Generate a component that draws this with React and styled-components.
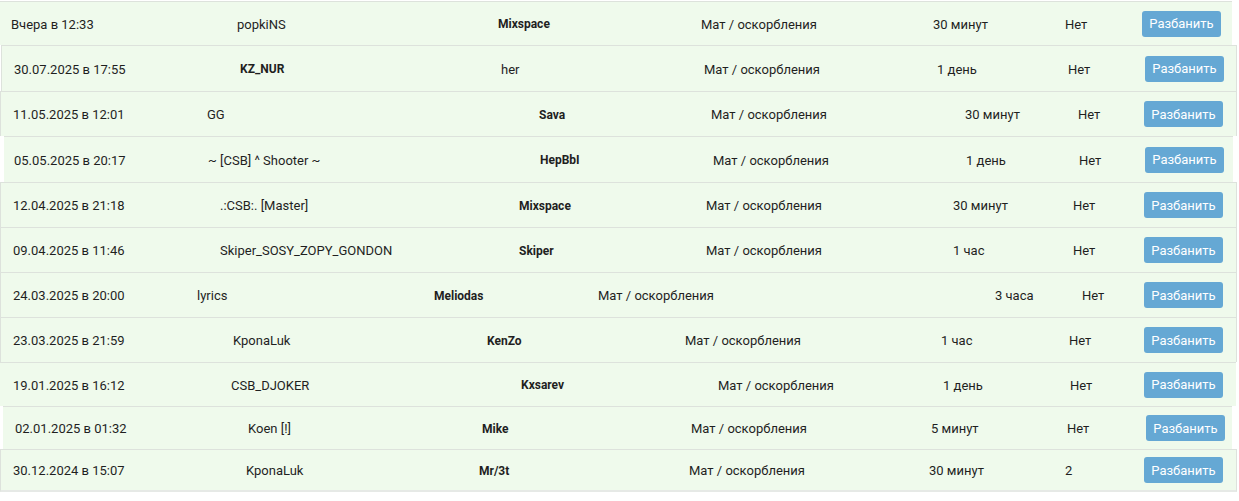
import React from "react";
import styled, { createGlobalStyle } from "styled-components";

const GlobalStyle = createGlobalStyle`
  body {
    margin: 0;
    background: #fff;
    font-family: Roboto, "Liberation Sans", Arial, sans-serif;
  }
`;

const List = styled.div`
  display: flex;
  flex-direction: column;
  padding-top: 1px;
  width: 1239px;
`;

const Row = styled.div`
  display: grid;
  grid-template-columns: ${({ $cols }) => $cols};
  align-items: center;
  height: ${({ $h }) => $h}px;
  box-sizing: border-box;
  margin-left: ${({ $x }) => $x}px;
  width: ${({ $w }) => $w}px;
  background: #effaec;
  border-top: 1px solid #dde2dc;
  border-left: ${({ $edge }) => ($edge ? "1px solid #dde2dc" : "none")};
  border-right: ${({ $edge }) => ($edge ? "1px solid #dde2dc" : "none")};
  &:last-child {
    border-bottom: 2px solid #e6e9e6;
  }
`;

const Cell = styled.div`
  font-size: ${({ $bold }) => ($bold ? 12 : 13)}px;
  color: #1f1f1f;
  white-space: nowrap;
  font-weight: ${({ $bold }) => ($bold ? 700 : 400)};
  padding-top: 1px;
`;

const UnbanButton = styled.button`
  font-family: Roboto, "Liberation Sans", Arial, sans-serif;
  font-size: 13px;
  color: #fff;
  background: #65a8d4;
  border: none;
  border-radius: 3px;
  height: 26px;
  width: 79px;
  padding: 0;
  cursor: pointer;
`;

const bans = [
  { h: 44, x: 0, w: 1232, edge: false, bold: 2, at: [11, 237, 498, 701, 933, 1065, 1142], cells: ["Вчера в 12:33", "popkiNS", "Mixspace", "Мат / оскорбления", "30 минут", "Нет"] },
  { h: 46, x: 1, w: 1236, edge: true, bold: 1, at: [13, 239, 500, 703, 936, 1067, 1144], cells: ["30.07.2025 в 17:55", "KZ_NUR", "her", "Мат / оскорбления", "1 день", "Нет"] },
  { h: 45, x: 0, w: 1237, edge: true, bold: 2, at: [12, 206, 538, 710, 964, 1077, 1143], cells: ["11.05.2025 в 12:01", "GG", "Sava", "Мат / оскорбления", "30 минут", "Нет"] },
  { h: 46, x: 4, w: 1229, edge: false, bold: 2, at: [14, 208, 540, 713, 966, 1079, 1145], cells: ["05.05.2025 в 20:17", "~ [CSB] ^ Shooter ~", "HepBbI", "Мат / оскорбления", "1 день", "Нет"] },
  { h: 45, x: 0, w: 1237, edge: true, bold: 2, at: [12, 219, 518, 705, 952, 1072, 1143], cells: ["12.04.2025 в 21:18", ".:CSB:. [Master]", "Mixspace", "Мат / оскорбления", "30 минут", "Нет"] },
  { h: 45, x: 0, w: 1237, edge: true, bold: 2, at: [12, 219, 518, 705, 952, 1072, 1143], cells: ["09.04.2025 в 11:46", "Skiper_SOSY_ZOPY_GONDON", "Skiper", "Мат / оскорбления", "1 час", "Нет"] },
  { h: 45, x: 0, w: 1237, edge: true, bold: 2, at: [12, 196, 433, 597, 994, 1081, 1143], cells: ["24.03.2025 в 20:00", "lyrics", "Meliodas", "Мат / оскорбления", "3 часа", "Нет"] },
  { h: 45, x: 0, w: 1237, edge: true, bold: 2, at: [12, 232, 486, 684, 940, 1068, 1143], cells: ["23.03.2025 в 21:59", "KponaLuk", "KenZo", "Мат / оскорбления", "1 час", "Нет"] },
  { h: 44, x: 0, w: 1236, edge: false, bold: 2, at: [13, 231, 521, 718, 943, 1070, 1144], cells: ["19.01.2025 в 16:12", "CSB_DJOKER", "Kxsarev", "Мат / оскорбления", "1 день", "Нет"] },
  { h: 43, x: 3, w: 1229, edge: false, bold: 2, at: [15, 248, 482, 691, 931, 1067, 1146], cells: ["02.01.2025 в 01:32", "Koen [!]", "Mike", "Мат / оскорбления", "5 минут", "Нет"] },
  { h: 43, x: 0, w: 1237, edge: true, bold: 2, at: [12, 245, 478, 688, 928, 1064, 1143], cells: ["30.12.2024 в 15:07", "KponaLuk", "Mr/3t", "Мат / оскорбления", "30 минут", "2"] },
];

// column widths from the measured text starts of each row
function columns(ban) {
  const start = ban.at.map((v) => v - ban.x);
  const widths = [start[0]];
  for (let i = 1; i < start.length; i++) widths.push(start[i] - start[i - 1]);
  return widths.map((v) => `${v}px`).join(" ") + " 1fr";
}

export default function App() {
  return (
    <>
      <GlobalStyle />
      <List>
        {bans.map((ban, i) => (
          <Row key={i} $h={ban.h} $x={ban.x} $w={ban.w} $edge={ban.edge} $cols={columns(ban)}>
            <span />
            {ban.cells.map((text, j) => (
              <Cell key={j} $bold={ban.bold === j}>
                {text}
              </Cell>
            ))}
            <div>
              <UnbanButton>Разбанить</UnbanButton>
            </div>
          </Row>
        ))}
      </List>
    </>
  );
}
